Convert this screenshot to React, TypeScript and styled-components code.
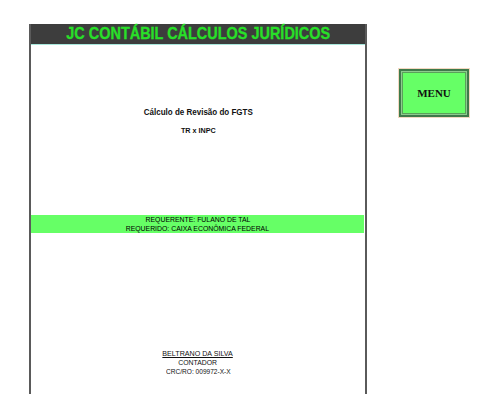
import styled, { createGlobalStyle } from "styled-components";

const GlobalStyle = createGlobalStyle`
  body {
    margin: 0;
    background: #ffffff;
    font-family: "Liberation Sans", Arial, sans-serif;
  }
`;

export default function App() {
  return (
    <>
      <GlobalStyle />
      <Page>
        <Sheet>
          <Header>
            <Narrow $scale={0.85}>JC CONTÁBIL CÁLCULOS JURÍDICOS</Narrow>
          </Header>
          <Body>
            <Title>
              <Narrow $scale={0.89}>Cálculo de Revisão do FGTS</Narrow>
            </Title>
            <Subtitle>
              <Narrow $scale={0.9}>TR x INPC</Narrow>
            </Subtitle>
            <Parties>
              <div>
                <Narrow $scale={0.86}>REQUERENTE: FULANO DE TAL</Narrow>
              </div>
              <div>
                <Narrow $scale={0.86}>REQUERIDO: CAIXA ECONÔMICA FEDERAL</Narrow>
              </div>
            </Parties>
            <Signature>
              <div>
                <SignName $scale={0.89}>BELTRANO DA SILVA</SignName>
              </div>
              <div>
                <Narrow $scale={0.86}>CONTADOR</Narrow>
              </div>
              <div>
                <Narrow $scale={0.82}>CRC/RO: 009972-X-X</Narrow>
              </div>
            </Signature>
          </Body>
        </Sheet>
        <MenuButton>MENU</MenuButton>
      </Page>
    </>
  );
}

const Page = styled.div`
  display: flex;
  align-items: flex-start;
  padding: 24px 0 0 29px;
  height: 413px;
  box-sizing: border-box;
  overflow: hidden;
`;

const Sheet = styled.div`
  width: 338px;
  height: 370px;
  display: flex;
  flex-direction: column;
  box-sizing: border-box;
  border-left: 2px solid #5a5a5a;
  border-right: 2px solid #5a5a5a;
`;

const Narrow = styled.span<{ $scale: number }>`
  display: inline-block;
  white-space: nowrap;
  transform: scaleX(${(p) => p.$scale});
`;

const Header = styled.div`
  height: 20px;
  background: #3d3d3d;
  border-bottom: 1px solid #a8e8dc;
  color: #28e028;
  font-weight: bold;
  font-size: 17px;
  line-height: 20px;
  text-align: center;
  -webkit-text-stroke: 0.3px #28e028;
`;

const Body = styled.div`
  flex: 1;
  display: flex;
  flex-direction: column;
  align-items: stretch;
  text-align: center;
  color: #111;
`;

const Title = styled.div`
  margin-top: 61px;
  font-size: 9px;
  font-weight: bold;
  line-height: 12px;
`;

const Subtitle = styled.div`
  margin-top: 7px;
  font-size: 8px;
  font-weight: bold;
  line-height: 12px;
`;

const Parties = styled.div`
  margin-top: 78px;
  margin-right: 1px;
  background: #66ff66;
  font-size: 8px;
  line-height: 9px;
  height: 18px;
  color: #000;
`;

const Signature = styled.div`
  margin-top: 116px;
  font-size: 8px;
  line-height: 9px;
  color: #111;
`;

const SignName = styled(Narrow)`
  text-decoration: underline;
`;

const MenuButton = styled.div`
  margin: 45px 0 0 32px;
  width: 70px;
  height: 48px;
  box-sizing: border-box;
  display: flex;
  align-items: center;
  justify-content: center;
  background: #66ff66;
  border: 2px solid #3e7a4a;
  outline: 1px solid #f3d8c0;
  box-shadow: inset 0 0 0 1px #8ec98e, inset 0 0 0 2px #5aa05a;
  font-family: "Liberation Serif", "Times New Roman", serif;
  font-weight: bold;
  font-size: 11px;
  color: #111;
`;
